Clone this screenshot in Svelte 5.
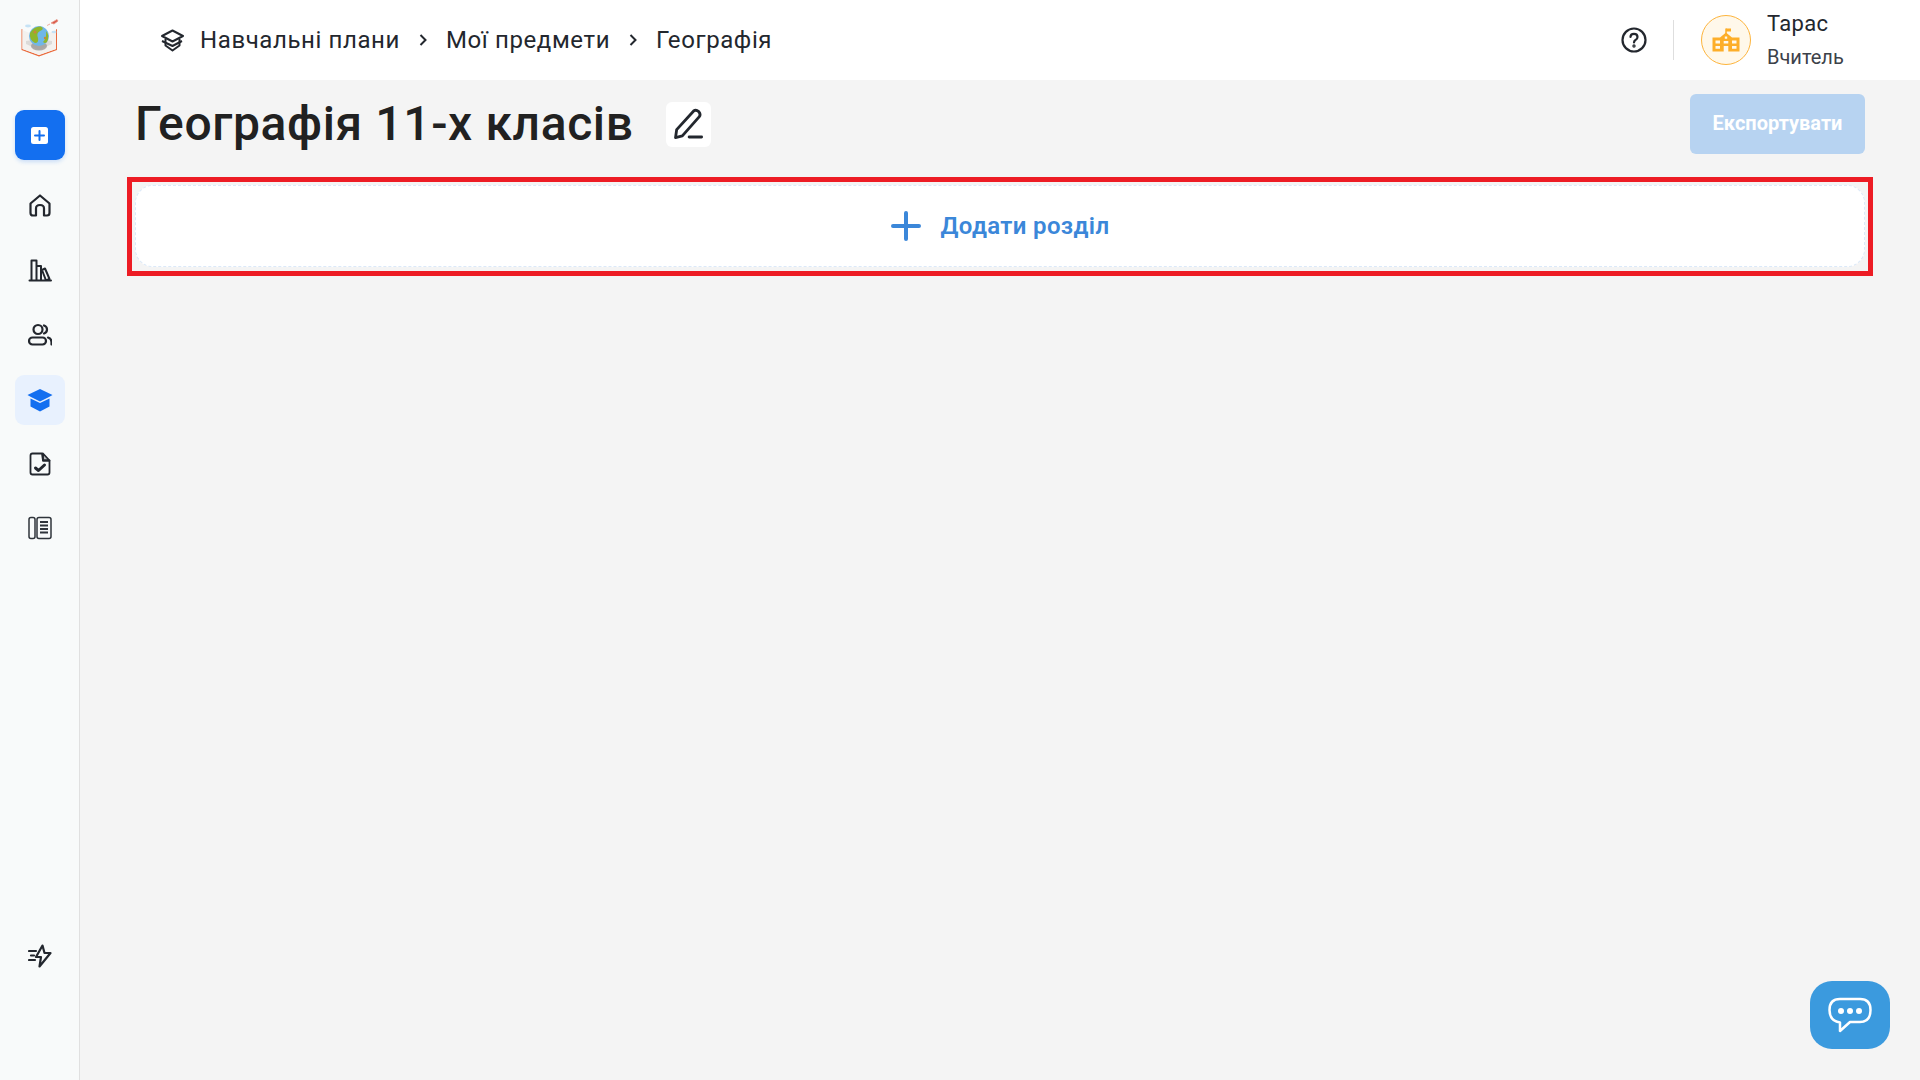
<script>
	const crumbs = ['Навчальні плани', 'Мої предмети', 'Географія'];
</script>

<div class="app">
	<aside class="sidebar">
		<div class="logo">
			<svg width="40" height="40" viewBox="0 0 40 40">
				<path d="M1.500 10 V31 L19 37.500 L37 31 V10 L36 10.500 V30 L19 36 L2.500 30 V10.500 Z" fill="#ea6a3c" />
				<path d="M2.500 11 V30 L19 36 L36 30 V11 L19 18 Z" fill="#f3f1ef" />
				<path d="M6 25 L19 31 L32 25 L32 22 L19 20 L6 22 Z" fill="#dcdad8" />
				<ellipse cx="19" cy="27" rx="8" ry="4.500" fill="#9c9a99" opacity="0.8" />
				<circle cx="19" cy="17" r="10" fill="#6fb7e8" />
				<path d="M10 14 Q14 7 21 7.500 Q25 10 20 12 Q16 14 18 19 Q19 24 15 24 Q9 21 10 14 Z" fill="#8fb62c" />
				<path d="M23 23 Q27 19 26 12 Q30 17 27 23 Q25 25 23 23 Z" fill="#8fb62c" />
				<circle cx="15" cy="13" r="1.500" fill="#c9853c" />
				<circle cx="25" cy="19" r="1.200" fill="#c9853c" />
				<path d="M27 6.500 L30 5 M31 4 L37 0.500 L38 2 L34 5 Z" fill="#d9574a" stroke="#e89a88" stroke-width="0.800" />
				<ellipse cx="8" cy="7" rx="3" ry="1.400" fill="#c6e2f5" />
				<ellipse cx="34" cy="13" rx="2.500" ry="1.200" fill="#c6e2f5" />
			</svg>
		</div>
		<button class="add-btn" aria-label="Додати">
			<svg width="17" height="17" viewBox="0 0 17 17">
				<rect width="17" height="17" rx="2.500" fill="#fff" />
				<path d="M8.500 4v9M4 8.500h9" stroke="#136ff0" stroke-width="2" stroke-linecap="round" />
			</svg>
		</button>
		<nav class="nav">
			<div class="nav-item">
				<svg width="24" height="24" viewBox="0 0 24 24" fill="none" stroke="#23272e" stroke-width="2.200" stroke-linejoin="round">
					<path d="M2.500 10.500 L12 2.500 L21.500 10.500 V20 Q21.500 22.500 19 22.500 H16 V15.500 Q16 12 12 12 Q8 12 8 15.500 V22.500 H5 Q2.500 22.500 2.500 20 Z" />
				</svg>
			</div>
			<div class="nav-item">
				<svg width="24" height="24" viewBox="0 0 24 24" fill="none" stroke="#23272e" stroke-width="2" stroke-linejoin="round" stroke-linecap="round">
					<path d="M3.500 22 V2.500 H8.500 V22 M8.500 8 H13 V22 M14 12 L17 10.500 L21.500 21 L18 22.500 Z M1.500 22.500 H23" />
				</svg>
			</div>
			<div class="nav-item">
				<svg width="24" height="24" viewBox="0 0 24 24" fill="none" stroke="#23272e" stroke-width="2.200" stroke-linecap="round">
					<circle cx="10" cy="6.500" r="4.500" />
					<rect x="1" y="14.500" width="17" height="7" rx="3.500" />
					<path d="M16 2.500 Q19 3.500 19 6.500 Q19 9.500 16 10.500 M20 14.500 Q23.500 15.500 23.500 19 V21.500" />
				</svg>
			</div>
			<div class="nav-item active">
				<svg width="26" height="24" viewBox="0 0 26 24">
					<path d="M13 1 L25.500 7 L22 9 L13 13.500 L4 9 L0.500 7 Z" fill="#136ff0" />
					<path d="M3.500 10.500 L13 15 L22.500 10.500 V18.500 L13 23.500 L3.500 18.500 Z" fill="#136ff0" />
				</svg>
			</div>
			<div class="nav-item">
				<svg width="22" height="24" viewBox="0 0 22 24" fill="none" stroke="#23272e" stroke-width="1.800" stroke-linejoin="round" stroke-linecap="round">
					<path d="M13 1.500 H3.500 Q1.500 1.500 1.500 3.500 V20.500 Q1.500 22.500 3.500 22.500 H18.500 Q20.500 22.500 20.500 20.500 V8.500 H14 Z" />
					<path d="M14 1.500 L20.500 8.500 H14 Z" fill="#23272e" fill-opacity="0.3" />
					<path d="M6.500 16 L9.500 18.500 L15.500 13" stroke-width="3" />
				</svg>
			</div>
			<div class="nav-item">
				<svg width="24" height="24" viewBox="0 0 24 24" fill="none" stroke="#2f343b" stroke-width="1.500">
					<rect x="1" y="1.500" width="6" height="21" rx="2" />
					<rect x="9" y="1.500" width="14" height="21" rx="2" />
					<path d="M12 6h8M12 9.500h8M12 13h8M12 16.500h8" stroke-width="2" />
				</svg>
			</div>
		</nav>
		<div class="nav-bottom">
			<svg width="24" height="24" viewBox="0 0 24 24" fill="none" stroke="#23272e" stroke-width="2.200" stroke-linejoin="round" stroke-linecap="round">
				<path d="M14.500 1.500 L8 13 H13 L11.500 22.500 L22.500 9 H16.500 Z" />
				<path d="M1 7h7M3 11.500h3M1 16h6" />
			</svg>
		</div>
	</aside>

	<div class="main">
		<header class="header">
			<div class="breadcrumbs">
				<svg class="crumb-icon" width="25" height="23" viewBox="0 0 25 23" fill="none" stroke="#23272e" stroke-width="2" stroke-linejoin="round">
					<path d="M12.500 1.500 L23 7 L12.500 12.500 L2 7 Z" />
					<path d="M5.500 10 V16.500 L12.500 21.500 L19.500 16.500 V10" />
					<path d="M2 12 L12.500 17 L22 12" />
				</svg>
				{#each crumbs as crumb, i}
					{#if i > 0}
						<svg class="chevron" width="10" height="14" viewBox="0 0 10 14" fill="none" stroke="#23272e" stroke-width="2">
							<path d="M2.500 2 L7.500 7 L2.500 12" />
						</svg>
					{/if}
					<span class="crumb">{crumb}</span>
				{/each}
			</div>
			<div class="header-right">
				<svg width="26" height="26" viewBox="0 0 26 26" fill="none" stroke="#23272e" stroke-width="2.200" stroke-linecap="round">
					<circle cx="13" cy="13" r="11.500" />
					<path d="M9.500 10 Q9.500 6.800 13 6.800 Q16.500 6.800 16.500 10 Q16.500 12 14.500 13 Q13 13.800 13 15.500" />
					<circle cx="13" cy="19" r="0.600" fill="#23272e" />
				</svg>
				<div class="divider"></div>
				<div class="avatar">
					<svg width="28" height="24" viewBox="0 0 28 24">
						<path d="M14 6V0.500" stroke="#fdae29" stroke-width="1.500" />
						<path d="M14 0.500h5v3h-5z" fill="#fdae29" />
						<path fill-rule="evenodd" fill="#fdae29" d="M14 4.500 L20 9.500 H27.500 V23.500 H0.500 V9.500 H8 Z M12.800 8.500 v2.200 h2.400 v-2.200 Z M3.500 12.500 v3 h4.500 v-3 Z M11.700 13 v2.500 h4.600 v-2.500 Z M20 12.500 v3 h4.500 v-3 Z M3.500 18 v2.800 h4.500 v-2.800 Z M11.700 18 v5.500 h4.600 v-5.500 Z M20 18 v2.800 h4.500 v-2.800 Z" />
					</svg>
				</div>
				<div class="user">
					<span class="user-name">Тарас</span>
					<span class="user-role">Вчитель</span>
				</div>
			</div>
		</header>

		<div class="content">
			<div class="title-row">
				<h1>Географія 11-х класів</h1>
				<button class="edit-btn" aria-label="Редагувати">
					<svg width="34" height="34" viewBox="0 0 30 30" fill="none" stroke="#23272e" stroke-width="2.500" stroke-linecap="round" stroke-linejoin="round">
						<path d="M5 20 L20 3.500 Q22 2 24.500 4 Q26.500 6.500 25 8.500 L10 25.500 L4 27 Z" />
						<path d="M16 26.500 H27" />
					</svg>
				</button>
				<button class="export-btn">Експортувати</button>
			</div>

			<div class="highlight">
				<button class="add-section">
					<svg width="30" height="30" viewBox="0 0 30 30" fill="none" stroke="#3b87d9" stroke-width="4" stroke-linecap="round">
						<path d="M15 2v26M2 15h26" />
					</svg>
					<span>Додати розділ</span>
				</button>
			</div>
		</div>
	</div>

	<button class="chat" aria-label="Чат">
		<svg width="44" height="38" viewBox="0 0 44 38" fill="none">
			<path d="M12 2 H32 Q42.500 2 42.500 13 Q42.500 25 32 25 H22 L12 34 V25.500 Q1.500 24 1.500 13 Q1.500 2 12 2 Z" stroke="#fff" stroke-width="2.500" stroke-linejoin="round" />
			<circle cx="13" cy="14" r="3" fill="#fff" />
			<circle cx="22" cy="14" r="3" fill="#fff" />
			<circle cx="31" cy="14" r="3" fill="#fff" />
		</svg>
	</button>
</div>

<style>
	:global(body) {
		font-family: Roboto, "Open Sans", "Liberation Sans", sans-serif;
		color: #23272e;
	}

	.app {
		display: flex;
		height: 100vh;
		overflow: hidden;
		background: #f4f4f4;
	}

	.sidebar {
		width: 79px;
		flex-shrink: 0;
		display: flex;
		flex-direction: column;
		align-items: center;
		background: #f8fafa;
		border-right: 1px solid #e0e0e0;
		padding-top: 19px;
		padding-bottom: 112px;
		box-sizing: content-box;
		height: calc(100vh - 131px);
	}

	.logo {
		height: 40px;
	}

	.add-btn {
		width: 50px;
		height: 50px;
		margin-top: 51px;
		padding: 0;
		display: flex;
		align-items: center;
		justify-content: center;
		border: none;
		border-radius: 9px;
		background: #136ff0;
		box-shadow: 0 2px 4px rgba(19, 111, 240, 0.2);
	}

	.nav {
		display: flex;
		flex-direction: column;
		gap: 15px;
		margin-top: 20px;
	}

	.nav-item {
		width: 50px;
		height: 50px;
		display: flex;
		align-items: center;
		justify-content: center;
		border-radius: 9px;
	}

	.nav-item.active {
		background: #e8f1fe;
	}

	.nav-item.active ~ .nav-item {
		margin-top: -1px;
	}

	.nav-bottom {
		margin-top: auto;
		height: 24px;
	}

	.main {
		flex: 1;
		min-width: 0;
		display: flex;
		flex-direction: column;
	}

	.header {
		height: 80px;
		flex-shrink: 0;
		display: flex;
		align-items: center;
		justify-content: space-between;
		background: #fff;
		padding: 0 15px 0 80px;
		box-sizing: border-box;
	}

	.breadcrumbs {
		display: flex;
		align-items: center;
		font-size: 24px;
		letter-spacing: 0.6px;
	}

	.crumb-icon {
		margin-right: 15px;
	}

	.chevron {
		margin: 0 18px;
	}

	.header-right {
		display: flex;
		align-items: center;
	}

	.divider {
		width: 1px;
		height: 40px;
		margin: 0 27px 0 26px;
		background: #dedede;
	}

	.avatar {
		width: 50px;
		height: 50px;
		box-sizing: border-box;
		display: flex;
		align-items: center;
		justify-content: center;
		border: 1.5px solid #fdb43c;
		border-radius: 50%;
		background: #fff8ea;
	}

	.user {
		width: 138px;
		margin-left: 16px;
		display: flex;
		flex-direction: column;
		gap: 8px;
	}

	.user-name {
		font-size: 22px;
		line-height: 26px;
		letter-spacing: 0.3px;
	}

	.user-role {
		font-size: 20px;
		line-height: 24px;
		color: #3c4149;
	}

	.content {
		flex: 1;
		padding: 14px 47px 0;
	}

	.title-row {
		display: flex;
		align-items: center;
		height: 60px;
		padding: 0 8px;
	}

	h1 {
		margin: -2px 0 0;
		font-size: 48px;
		font-weight: 500;
		letter-spacing: 0.62px;
		color: #212121;
	}

	.edit-btn {
		width: 45px;
		height: 45px;
		margin-left: 32px;
		padding: 0;
		display: flex;
		align-items: center;
		justify-content: center;
		background: #fff;
		border: none;
		border-radius: 6px;
	}

	.export-btn {
		margin-left: auto;
		margin-top: 0;
		width: 175px;
		height: 60px;
		padding: 0 0 3px;
		border: none;
		border-radius: 6px;
		background: #b7d3f1;
		color: #fff;
		font-family: inherit;
		font-size: 20px;
		font-weight: 700;
	}

	.highlight {
		margin-top: 23px;
		border: 5px solid #ed1c24;
		padding: 3px 3px 4px;
	}

	.add-section {
		width: 100%;
		height: 82px;
		display: flex;
		align-items: center;
		justify-content: center;
		gap: 20px;
		background: #fff;
		border: 1.5px dashed #dbe9f9;
		border-radius: 18px;
		color: #3b87d9;
		font-family: inherit;
		font-size: 24px;
		font-weight: 600;
		letter-spacing: 0.35px;
	}

	.chat {
		position: absolute;
		right: 30px;
		bottom: 31px;
		width: 80px;
		height: 68px;
		padding: 2px 0 0;
		display: flex;
		align-items: center;
		justify-content: center;
		border: none;
		border-radius: 22px;
		background: #3b9ade;
	}
</style>
